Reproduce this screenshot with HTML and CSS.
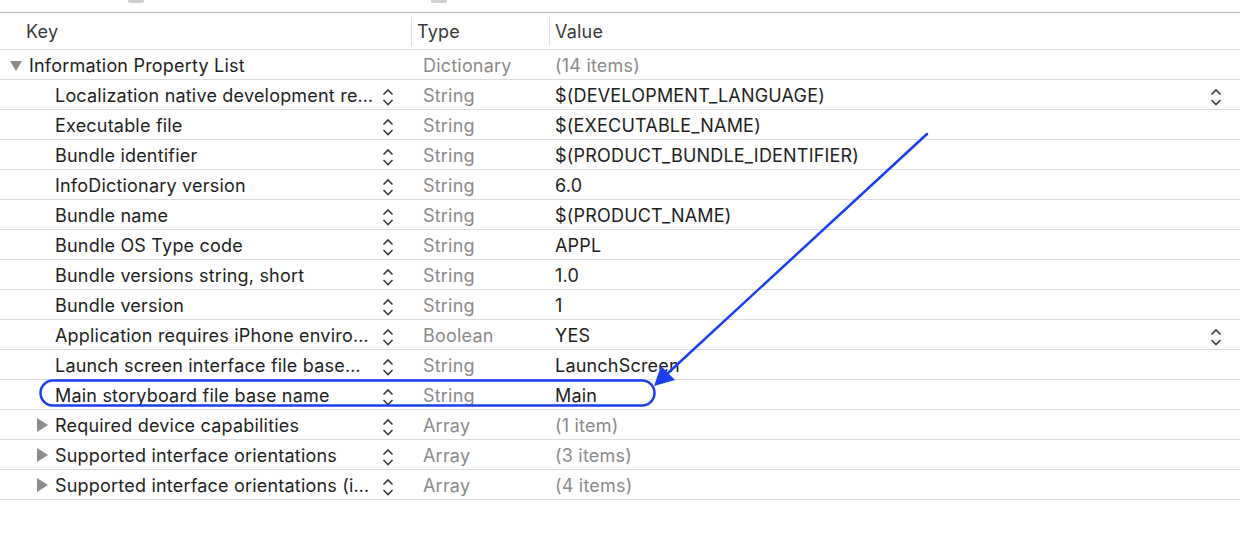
FILE: index.html
```html
<!DOCTYPE html>
<html>
<head>
<meta charset="utf-8">
<link rel="stylesheet" href="styles.css">
</head>
<body>
<div class="page">
  <div class="topbar"><span class="blob b1"></span><span class="blob b2"></span></div>
  <div class="header">
    <div class="hcell">Key</div>
    <div class="hcell sep">Type</div>
    <div class="hcell sep">Value</div>
  </div>

  <div class="row">
    <div class="key top"><span class="tri-down"></span><span class="ktext">Information Property List</span></div>
    <div class="type">Dictionary</div>
    <div class="val dim">(14 items)</div>
  </div>

  <div class="row">
    <div class="key child"><span class="ktext">Localization native development re…</span><svg class="step" viewBox="0 0 12 20"><path d="M1.5 7.5 L6 3 L10.5 7.5 M1.5 13 L6 17.5 L10.5 13"/></svg></div>
    <div class="type">String</div>
    <div class="val"><span>$(DEVELOPMENT_LANGUAGE)</span><svg class="step vstep" viewBox="0 0 12 20"><path d="M1.5 7.5 L6 3 L10.5 7.5 M1.5 13 L6 17.5 L10.5 13"/></svg></div>
  </div>

  <div class="row">
    <div class="key child"><span class="ktext">Executable file</span><svg class="step" viewBox="0 0 12 20"><path d="M1.5 7.5 L6 3 L10.5 7.5 M1.5 13 L6 17.5 L10.5 13"/></svg></div>
    <div class="type">String</div>
    <div class="val">$(EXECUTABLE_NAME)</div>
  </div>

  <div class="row">
    <div class="key child"><span class="ktext">Bundle identifier</span><svg class="step" viewBox="0 0 12 20"><path d="M1.5 7.5 L6 3 L10.5 7.5 M1.5 13 L6 17.5 L10.5 13"/></svg></div>
    <div class="type">String</div>
    <div class="val">$(PRODUCT_BUNDLE_IDENTIFIER)</div>
  </div>

  <div class="row">
    <div class="key child"><span class="ktext">InfoDictionary version</span><svg class="step" viewBox="0 0 12 20"><path d="M1.5 7.5 L6 3 L10.5 7.5 M1.5 13 L6 17.5 L10.5 13"/></svg></div>
    <div class="type">String</div>
    <div class="val">6.0</div>
  </div>

  <div class="row">
    <div class="key child"><span class="ktext">Bundle name</span><svg class="step" viewBox="0 0 12 20"><path d="M1.5 7.5 L6 3 L10.5 7.5 M1.5 13 L6 17.5 L10.5 13"/></svg></div>
    <div class="type">String</div>
    <div class="val">$(PRODUCT_NAME)</div>
  </div>

  <div class="row">
    <div class="key child"><span class="ktext">Bundle OS Type code</span><svg class="step" viewBox="0 0 12 20"><path d="M1.5 7.5 L6 3 L10.5 7.5 M1.5 13 L6 17.5 L10.5 13"/></svg></div>
    <div class="type">String</div>
    <div class="val">APPL</div>
  </div>

  <div class="row">
    <div class="key child"><span class="ktext">Bundle versions string, short</span><svg class="step" viewBox="0 0 12 20"><path d="M1.5 7.5 L6 3 L10.5 7.5 M1.5 13 L6 17.5 L10.5 13"/></svg></div>
    <div class="type">String</div>
    <div class="val">1.0</div>
  </div>

  <div class="row">
    <div class="key child"><span class="ktext">Bundle version</span><svg class="step" viewBox="0 0 12 20"><path d="M1.5 7.5 L6 3 L10.5 7.5 M1.5 13 L6 17.5 L10.5 13"/></svg></div>
    <div class="type">String</div>
    <div class="val">1</div>
  </div>

  <div class="row">
    <div class="key child"><span class="ktext">Application requires iPhone enviro…</span><svg class="step" viewBox="0 0 12 20"><path d="M1.5 7.5 L6 3 L10.5 7.5 M1.5 13 L6 17.5 L10.5 13"/></svg></div>
    <div class="type">Boolean</div>
    <div class="val"><span>YES</span><svg class="step vstep" viewBox="0 0 12 20"><path d="M1.5 7.5 L6 3 L10.5 7.5 M1.5 13 L6 17.5 L10.5 13"/></svg></div>
  </div>

  <div class="row">
    <div class="key child"><span class="ktext">Launch screen interface file base…</span><svg class="step" viewBox="0 0 12 20"><path d="M1.5 7.5 L6 3 L10.5 7.5 M1.5 13 L6 17.5 L10.5 13"/></svg></div>
    <div class="type">String</div>
    <div class="val">LaunchScreen</div>
  </div>

  <div class="row">
    <div class="key child"><span class="ktext">Main storyboard file base name</span><svg class="step" viewBox="0 0 12 20"><path d="M1.5 7.5 L6 3 L10.5 7.5 M1.5 13 L6 17.5 L10.5 13"/></svg></div>
    <div class="type">String</div>
    <div class="val">Main</div>
  </div>

  <div class="row">
    <div class="key sub"><span class="tri-right"></span><span class="ktext">Required device capabilities</span><svg class="step" viewBox="0 0 12 20"><path d="M1.5 7.5 L6 3 L10.5 7.5 M1.5 13 L6 17.5 L10.5 13"/></svg></div>
    <div class="type">Array</div>
    <div class="val dim">(1 item)</div>
  </div>

  <div class="row">
    <div class="key sub"><span class="tri-right"></span><span class="ktext">Supported interface orientations</span><svg class="step" viewBox="0 0 12 20"><path d="M1.5 7.5 L6 3 L10.5 7.5 M1.5 13 L6 17.5 L10.5 13"/></svg></div>
    <div class="type">Array</div>
    <div class="val dim">(3 items)</div>
  </div>

  <div class="row">
    <div class="key sub"><span class="tri-right"></span><span class="ktext">Supported interface orientations (i…</span><svg class="step" viewBox="0 0 12 20"><path d="M1.5 7.5 L6 3 L10.5 7.5 M1.5 13 L6 17.5 L10.5 13"/></svg></div>
    <div class="type">Array</div>
    <div class="val dim">(4 items)</div>
  </div>

  <svg class="annot" viewBox="0 0 1240 534" width="1240" height="534">
    <rect x="40.5" y="380.5" width="614" height="25" rx="12.5" ry="12.5" fill="none" stroke="#1a3ff0" stroke-width="2.5"/>
    <line x1="927" y1="134" x2="668" y2="373" stroke="#1a3ff0" stroke-width="2.5" stroke-linecap="round"/>
    <path d="M654 386 L661 366 L675 380 Z" fill="#1a3ff0"/>
  </svg>
</div>
</body>
</html>
```

FILE: styles.css
```css
* { box-sizing: border-box; }
html, body { margin: 0; padding: 0; background: #fff; }
body {
  font-family: Inter, Roboto, "Liberation Sans", Arial, sans-serif;
  font-size: 18px;
  letter-spacing: 0.2px;
  color: #222;
}
.page { position: relative; width: 1240px; height: 534px; overflow: hidden; }

.topbar {
  height: 13px;
  border-bottom: 1px solid #b8b8b8;
  display: flex;
  align-items: flex-start;
}
.blob { display: block; height: 3px; background: #cfcfcf; border-radius: 0 0 2px 2px; }
.b1 { width: 16px; margin-left: 128px; }
.b2 { width: 16px; margin-left: 287px; }

.header {
  height: 37px;
  display: grid;
  grid-template-columns: 411px 138px 1fr;
  align-items: center;
  border-bottom: 1px solid #dedede;
  color: #3a3a3a;
}
.hcell { height: 29px; line-height: 29px; padding-left: 26px; }
.hcell.sep { border-left: 1px solid #e0e0e0; padding-left: 5px; }

.row {
  height: 30px;
  display: grid;
  grid-template-columns: 411px 138px 1fr;
  align-items: center;
  border-bottom: 1px solid #dcdcdc;
  padding-top: 1px;
}
.key { display: flex; align-items: center; height: 28px; }
.key.top { padding-left: 10px; }
.key.child { padding-left: 55px; }
.key.sub { padding-left: 37px; }
.ktext { flex: 1; white-space: nowrap; overflow: hidden; color: #1e1e1e; }

.tri-down {
  width: 0; height: 0;
  border-left: 6px solid transparent;
  border-right: 6px solid transparent;
  border-top: 10px solid #8c8c8c;
  margin-right: 7px;
  margin-top: 1px;
}
.tri-right {
  width: 0; height: 0;
  border-top: 7px solid transparent;
  border-bottom: 7px solid transparent;
  border-left: 11px solid #8c8c8c;
  margin-right: 7px;
}

.step {
  width: 12px; height: 20px;
  margin-right: 17px;
  margin-top: 4px;
  fill: none;
  stroke: #3c3c3c;
  stroke-width: 1.6;
  flex: none;
}
.vstep { margin-right: 18px; }

.type { padding-left: 12px; color: #8a8a8a; white-space: nowrap; }
.val { padding-left: 6px; display: flex; align-items: center; justify-content: space-between; white-space: nowrap; color: #1e1e1e; }
.val.dim { color: #8a8a8a; }

.annot { position: absolute; left: 0; top: 0; pointer-events: none; }
```
